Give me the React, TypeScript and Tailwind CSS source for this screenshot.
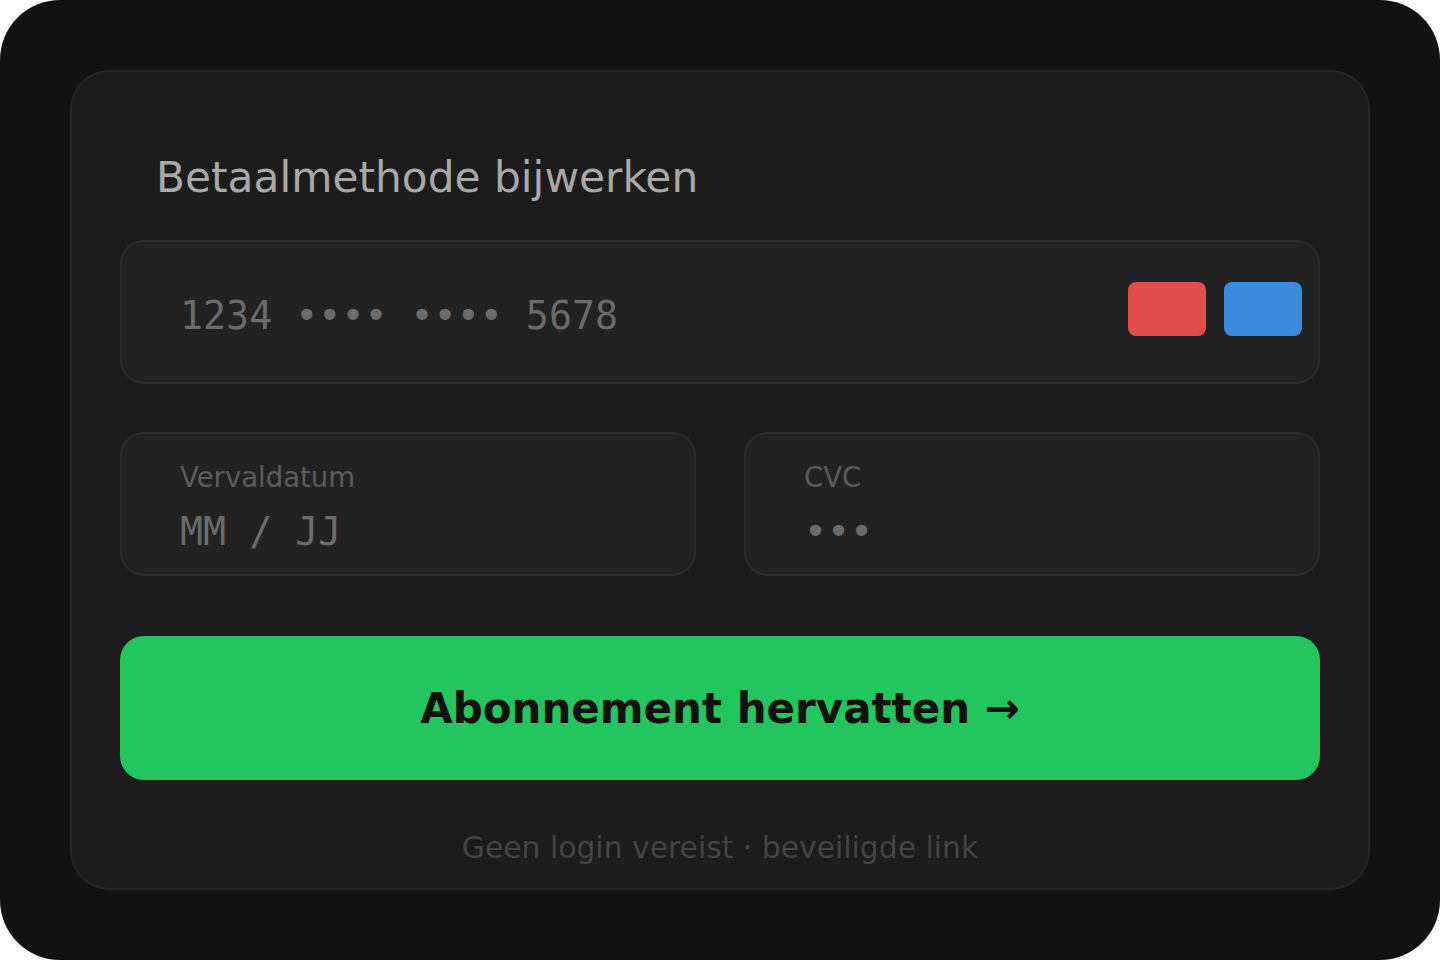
import React from "react";

const sans = { fontFamily: '"DejaVu Sans", "Noto Sans", sans-serif' };
const mono = { fontFamily: '"DejaVu Sans Mono", "Liberation Mono", monospace' };

export default function App() {
  return (
    <div className="w-[1440px] h-[960px] bg-white">
      <div className="w-[1440px] h-[960px] rounded-[60px] bg-[#121212] p-[70px]" style={sans}>
        <div className="w-[1300px] h-[820px] rounded-[40px] bg-[#1c1c1c] border-2 border-[#262626] px-[48px] pt-[81px] flex flex-col">
          <h1 className="ml-[36px] text-[42.3px] leading-[50px] text-[#a8a8a8] font-normal">
            Betaalmethode bijwerken
          </h1>

          <div className="mt-[37px] h-[144px] rounded-[24px] bg-[#222222] border-2 border-[#2e2e2e] flex items-start justify-between pl-[58px] pr-[16px]">
            <div className="mt-[52px] text-[38.3px] leading-[44px] text-[#6b6b6b]" style={mono}>
              1234 •••• •••• 5678
            </div>
            <div className="mt-[40px] flex gap-[18px]">
              <div className="w-[78px] h-[54px] rounded-[8px] bg-[#e34c4c]" />
              <div className="w-[78px] h-[54px] rounded-[8px] bg-[#3a8ade]" />
            </div>
          </div>

          <div className="mt-[48px] grid grid-cols-2 gap-[48px]">
            <div className="h-[144px] rounded-[24px] bg-[#222222] border-2 border-[#2e2e2e] pl-[58px] pt-[27px]">
              <div className="text-[27.5px] leading-[32px] text-[#5c5c5c]">Vervaldatum</div>
              <div className="mt-[17px] text-[38.3px] leading-[44px] text-[#6b6b6b]" style={mono}>
                MM / JJ
              </div>
            </div>
            <div className="h-[144px] rounded-[24px] bg-[#222222] border-2 border-[#2e2e2e] pl-[58px] pt-[27px]">
              <div className="text-[27.5px] leading-[32px] text-[#5c5c5c]">CVC</div>
              <div className="mt-[17px] text-[38.3px] leading-[44px] text-[#6b6b6b]" style={mono}>
                •••
              </div>
            </div>
          </div>

          <button className="mt-[60px] h-[144px] w-full rounded-[24px] bg-[#22c55e] flex items-center justify-center text-[42px] font-bold text-[#111111]" style={sans}>
            Abonnement hervatten →
          </button>

          <div className="mt-[50px] text-center text-[29.8px] leading-[36px] text-[#454545]">
            Geen login vereist · beveiligde link
          </div>
        </div>
      </div>
    </div>
  );
}
